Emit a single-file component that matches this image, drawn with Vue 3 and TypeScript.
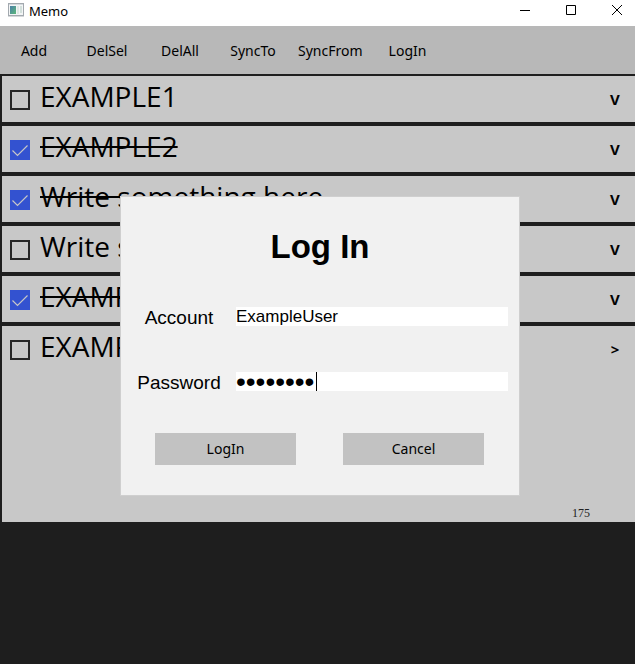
<script setup lang="ts">
import { ref } from 'vue'

interface Memo {
  id: number
  text: string
  done: boolean
  open: boolean
}

const actions = ['Add', 'DelSel', 'DelAll', 'SyncTo', 'SyncFrom', 'LogIn']

const memos = ref<Memo[]>([
  { id: 1, text: 'EXAMPLE1', done: false, open: false },
  { id: 2, text: 'EXAMPLE2', done: true, open: false },
  { id: 3, text: 'Write something here', done: true, open: false },
  { id: 4, text: 'Write something here', done: false, open: false },
  { id: 5, text: 'EXAMPLE3', done: true, open: false },
  { id: 6, text: 'EXAMPLE4', done: false, open: true },
])

const account = ref('ExampleUser')
const password = ref('password')
const showLogin = ref(true)
</script>

<template>
  <div class="window">
    <header class="titlebar">
      <svg class="app-icon" width="16" height="14" viewBox="0 0 16 14">
        <defs>
          <linearGradient id="pane" x1="0" y1="0" x2="1" y2="1">
            <stop offset="0" stop-color="#4a7fa8" />
            <stop offset="1" stop-color="#5cb87a" />
          </linearGradient>
        </defs>
        <rect x="0.5" y="0.5" width="15" height="12" fill="#f3f5f6" stroke="#a3a9af" />
        <rect x="1" y="1" width="14" height="1" fill="#d5dade" />
        <rect x="2" y="3" width="6" height="8" fill="url(#pane)" />
        <rect x="9" y="3" width="2" height="8" fill="#dfe8e4" />
        <rect x="12" y="3" width="2" height="7" fill="#d3e0dc" />
        <rect x="0" y="13" width="16" height="1" fill="#d5d8da" />
      </svg>
      <span class="app-name">Memo</span>
      <div class="controls">
        <button type="button" aria-label="Minimize">
          <svg width="10" height="10" viewBox="0 0 10 10"><path d="M0 5.5H10" /></svg>
        </button>
        <button type="button" aria-label="Maximize">
          <svg width="10" height="10" viewBox="0 0 10 10"><path d="M.5 .5H9.5V9.5H.5Z" /></svg>
        </button>
        <button type="button" aria-label="Close">
          <svg width="10" height="10" viewBox="0 0 10 10"><path d="M0 0L10 10M10 0L0 10" /></svg>
        </button>
      </div>
    </header>

    <main class="content">
      <nav class="toolbar">
        <button v-for="action in actions" :key="action" type="button">{{ action }}</button>
      </nav>

      <ul class="memos">
        <li v-for="memo in memos" :key="memo.id" class="memo" :class="{ open: memo.open }">
          <div class="memo-head">
            <input :id="`memo-${memo.id}`" v-model="memo.done" type="checkbox" class="check" />
            <label :for="`memo-${memo.id}`" class="memo-text">
              <span :class="{ done: memo.done }">{{ memo.text }}</span>
            </label>
            <button type="button" class="toggle" @click="memo.open = !memo.open">
              {{ memo.open ? '&gt;' : 'V' }}
            </button>
          </div>
          <p v-if="memo.open" class="count">175</p>
        </li>
      </ul>

      <div v-if="showLogin" class="overlay">
        <form class="dialog" @submit.prevent="showLogin = false">
          <h1>Log In</h1>
          <div class="field">
            <label for="account">Account</label>
            <input id="account" v-model="account" type="text" autocomplete="off" />
          </div>
          <div class="field">
            <label for="password">Password</label>
            <div class="secret">
              <input id="password" v-model="password" type="password" autocomplete="off" />
              <span class="caret"></span>
            </div>
          </div>
          <div class="buttons">
            <button type="submit">LogIn</button>
            <button type="button" @click="showLogin = false">Cancel</button>
          </div>
        </form>
      </div>
    </main>
  </div>
</template>

<style>
body {
  margin: 0;
  background: #1e1e1e;
}
</style>

<style scoped>
.window {
  display: flex;
  flex-direction: column;
  min-height: 100vh;
  background: #1e1e1e;
  color: #000;
  font-family: "Noto Sans", "Open Sans", sans-serif;
}

button {
  padding: 0;
  border: 0;
  background: transparent;
  color: inherit;
  font-family: inherit;
}

.titlebar {
  display: flex;
  align-items: flex-start;
  height: 26px;
  padding-left: 8px;
  background: #fff;
}

.app-icon {
  margin-top: 3px;
}

.app-name {
  flex: 1;
  margin-left: 5px;
  font-size: 13px;
  line-height: 22px;
}

.controls {
  display: flex;
  gap: 10px;
}

.controls button {
  display: grid;
  place-items: center;
  width: 36px;
  height: 20px;
}

.controls path {
  fill: none;
  stroke: #000;
}

.content {
  position: relative;
  flex: 1;
}

.toolbar {
  display: flex;
  gap: 5px;
  height: 48px;
  background: #b8b8b8;
}

.toolbar button {
  min-width: 68px;
  padding: 2px 6px 0;
  font-size: 14px;
  line-height: 20px;
}

.memos {
  display: flex;
  flex-direction: column;
  gap: 4px;
  margin: 2px 0 0 2px;
  padding: 0;
  list-style: none;
}

.memo {
  background: #c8c8c8;
}

.memo.open {
  display: flex;
  flex-direction: column;
  justify-content: space-between;
  min-height: 196px;
}

.memo-head {
  display: flex;
  align-items: flex-start;
  height: 46px;
  padding: 0 10px 0 8px;
}

.check {
  appearance: none;
  box-sizing: border-box;
  width: 20px;
  height: 20px;
  margin: 14px 10px 0 0;
  border: 2px solid #262626;
}

.check:checked {
  border: 0;
  background: #3352d0 url("data:image/svg+xml,%3Csvg xmlns='http://www.w3.org/2000/svg' viewBox='0 0 20 20'%3E%3Cpath d='M2.5 10.5L7.5 15.5L17.5 5.5' fill='none' stroke='%23c8c8c8' stroke-width='1.2'/%3E%3C/svg%3E");
}

.memo-text {
  flex: 1;
  font-family: "Open Sans", "Noto Sans", sans-serif;
  font-size: 28px;
  line-height: 40px;
  white-space: nowrap;
}

.done {
  text-decoration: line-through;
  text-decoration-thickness: 2px;
}

.toggle {
  width: 20px;
  height: 46px;
  font-size: 15px;
  font-weight: 700;
  line-height: 20px;
}

.count {
  margin: 0 45px 2px 0;
  color: #222;
  font: 12px/14px "Liberation Serif", serif;
  text-align: right;
}

.overlay {
  position: absolute;
  inset: 0;
  display: grid;
  place-items: center;
  padding: 2px 0 0 5px;
}

.dialog {
  box-sizing: border-box;
  width: 400px;
  min-height: 300px;
  padding: 30px 11px 20px 15px;
  border: 1px solid #cfcfcf;
  background: #f1f1f1;
  font-family: "Liberation Sans", Arial, sans-serif;
}

h1 {
  margin: 0 0 27px;
  padding-right: 4px;
  font-size: 33px;
  line-height: 40px;
  text-align: center;
}

.field {
  display: grid;
  grid-template-columns: 86px 1fr;
  align-items: center;
  gap: 14px;
  height: 45px;
  margin-bottom: 20px;
}

.field label {
  padding-top: 2px;
  font-size: 19px;
  line-height: 22px;
  text-align: center;
}

.field input {
  display: block;
  box-sizing: border-box;
  width: 100%;
  height: 19px;
  padding: 0;
  border: 0;
  outline: 0;
  background: #fff;
  color: #000;
  font: 17px/19px "Liberation Sans", Arial, sans-serif;
}

.secret {
  position: relative;
}

.field .secret input {
  caret-color: transparent;
  font-size: 28px;
}

.caret {
  position: absolute;
  top: 0;
  left: 80px;
  width: 1px;
  height: 19px;
  background: #000;
}

.buttons {
  display: grid;
  grid-template-columns: 1fr 1fr;
  gap: 47px;
  margin-top: 29px;
  padding: 0 24px 0 19px;
}

.buttons button {
  height: 32px;
  background: #c2c2c2;
  font: 14px/20px "Noto Sans", "Open Sans", sans-serif;
}
</style>
